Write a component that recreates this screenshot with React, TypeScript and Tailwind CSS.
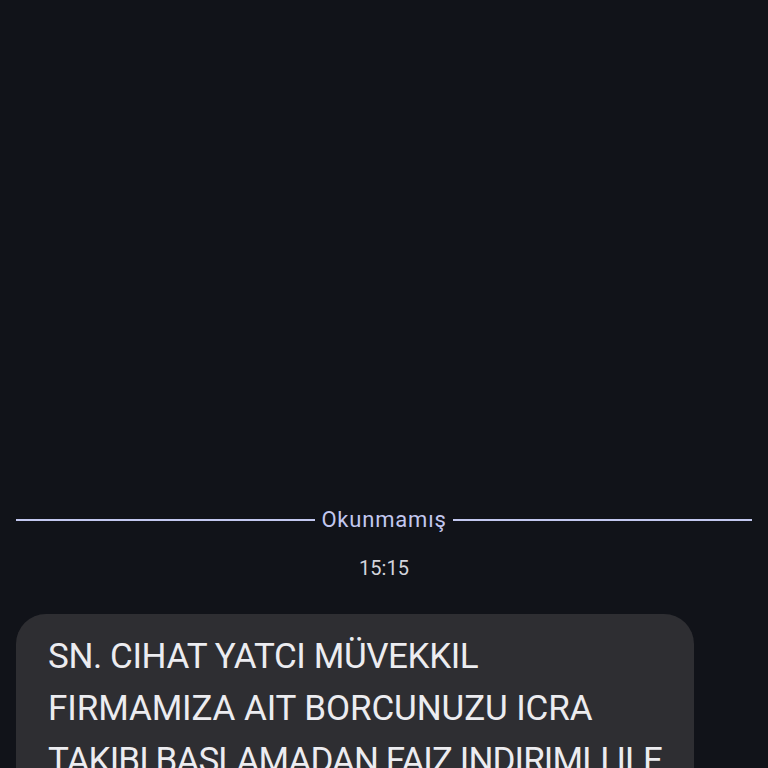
import React from "react";

export default function App() {
  return (
    <div
      className="h-[768px] w-[768px] overflow-hidden bg-[#111319] flex flex-col"
      style={{ fontFamily: "Roboto, 'Noto Sans', sans-serif" }}
    >
      <div className="h-[506px] shrink-0" />
      <div className="flex items-center px-4 gap-[6px]">
        <div className="flex-1 h-[2px] bg-[#c3c8f0]" />
        <span className="text-[22px] leading-[28px] tracking-[0.8px] text-[#c3c8f0]">Okunmamış</span>
        <div className="flex-1 h-[2px] bg-[#c3c8f0]" />
      </div>
      <div className="mt-[21px] text-center text-[20px] leading-[26px] text-[#d4d4dc]">15:15</div>
      <div className="mt-[33px] ml-4 w-[678px] rounded-[30px] bg-[#2e2e32] pl-8 pt-[17px] pb-8">
        <div className="text-[35px] leading-[52px] text-[#ececf0] whitespace-nowrap">
          <div className="tracking-[-0.4px]">SN. CIHAT YATCI MÜVEKKIL</div>
          <div className="tracking-[-0.1px]">FIRMAMIZA AIT BORCUNUZU ICRA</div>
          <div className="tracking-[-0.9px]">TAKIBI BASLAMADAN FAIZ INDIRIMLI ILE</div>
        </div>
      </div>
    </div>
  );
}
